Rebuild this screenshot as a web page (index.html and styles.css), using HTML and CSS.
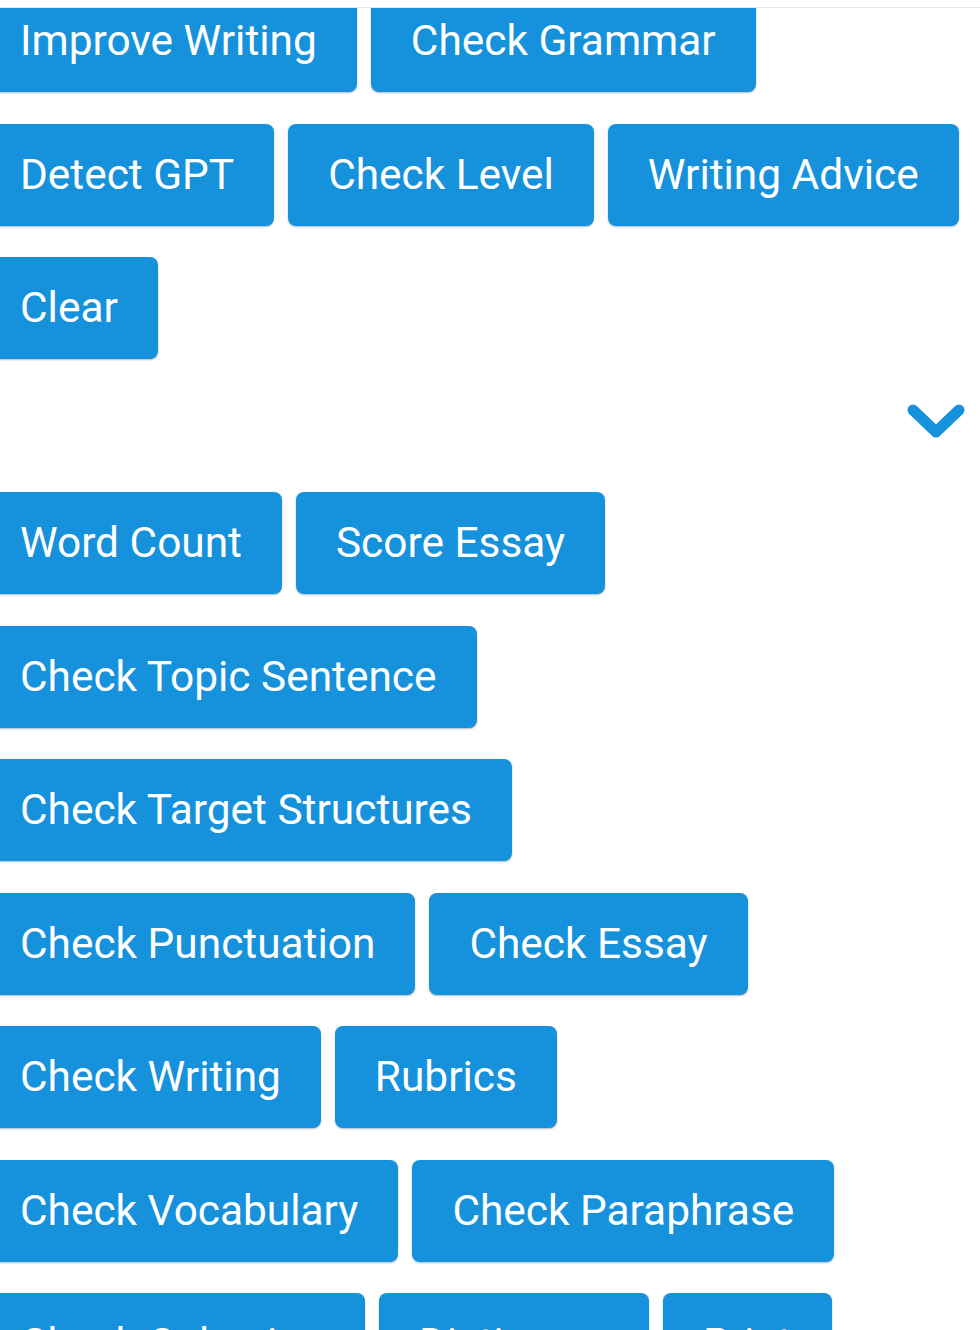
FILE: index.html
```html
<!DOCTYPE html>
<html lang="en">
<head>
  <meta charset="UTF-8" />
  <meta name="viewport" content="width=device-width, initial-scale=1.0" />
  <title>Writing Tools</title>
  <link rel="stylesheet" href="styles.css">
</head>
<body>
  <div class="panel">
    <div class="scroller">
      <div class="tools">
        <button class="tool">Improve Writing</button>
        <button class="tool">Check Grammar</button>
        <button class="tool">Detect GPT</button>
        <button class="tool">Check Level</button>
        <button class="tool">Writing Advice</button>
        <button class="tool">Clear</button>
      </div>

      <div class="toggle">
        <svg class="chevron" viewBox="0 0 60 36" width="60" height="36">
          <polyline points="7,7 30,29 53,7" fill="none" stroke="#1592db" stroke-width="11" stroke-linecap="round" stroke-linejoin="round" />
        </svg>
      </div>

      <div class="tools">
        <button class="tool">Word Count</button>
        <button class="tool">Score Essay</button>
        <button class="tool">Check Topic Sentence</button>
        <button class="tool">Check Target Structures</button>
        <button class="tool">Check Punctuation</button>
        <button class="tool">Check Essay</button>
        <button class="tool">Check Writing</button>
        <button class="tool">Rubrics</button>
        <button class="tool">Check Vocabulary</button>
        <button class="tool">Check Paraphrase</button>
        <button class="tool">Check Cohesion</button>
        <button class="tool">Dictionary</button>
        <button class="tool">Print</button>
      </div>
    </div>
  </div>
</body>
</html>
```

FILE: styles.css
```css
body {
  margin: 0;
  background: #ffffff;
  font-family: Roboto, 'Noto Sans', sans-serif;
  overflow: hidden;
}

.panel {
  margin-top: 7px;
  border-top: 1px solid #e6e6e6;
  height: 1330px;
  overflow: hidden;
}

.scroller {
  margin-top: -18px;
  margin-left: -20px;
  width: 980px;
}

.tools {
  display: flex;
  flex-wrap: wrap;
  column-gap: 14px;
  row-gap: 31.5px;
}

.tool {
  font-family: Roboto, 'Noto Sans', sans-serif;
  font-size: 42.4px;
  line-height: 50px;
  color: #fff;
  background: #1592db;
  border: none;
  border-radius: 8px;
  padding: 26px 40px;
  box-shadow: 0 1px 2px rgba(0, 60, 110, 0.35);
  cursor: pointer;
}

.toggle {
  display: flex;
  justify-content: flex-end;
  align-items: center;
  height: 60px;
  margin: 31.5px -6px 41.5px 0;
}

.chevron {
  display: block;
}
```
